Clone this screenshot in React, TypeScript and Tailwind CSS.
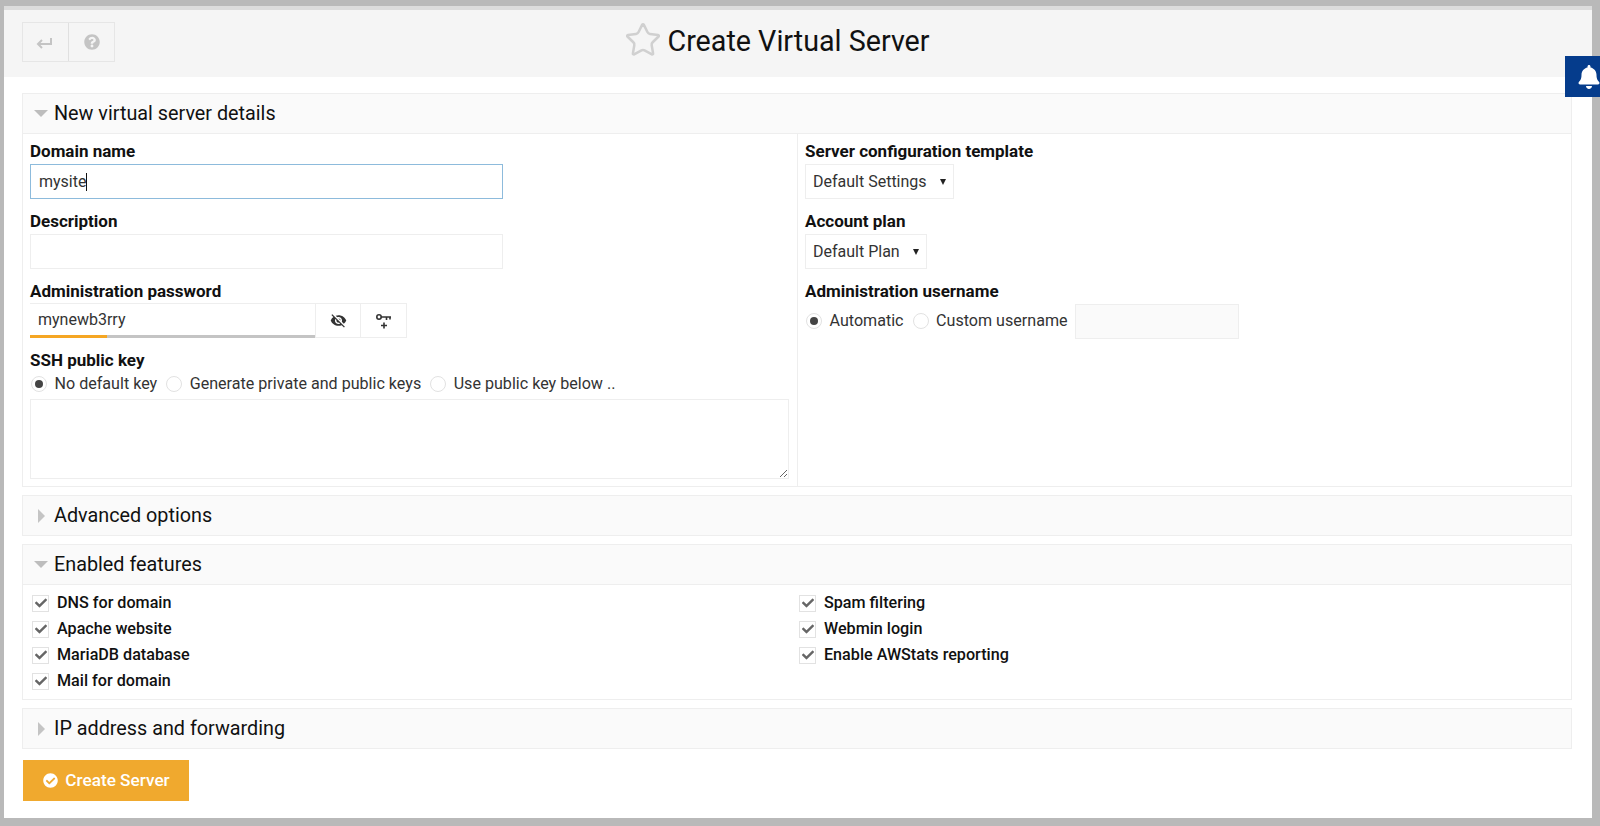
import { Star } from "lucide-react";
import { FaBell, FaCheck, FaCheckCircle, FaQuestionCircle } from "react-icons/fa";
import { MdVisibilityOff } from "react-icons/md";

const leftFeatures = ["DNS for domain", "Apache website", "MariaDB database", "Mail for domain"];
const rightFeatures = ["Spam filtering", "Webmin login", "Enable AWStats reporting"];

const Caret = ({ open }: { open: boolean }) =>
  open ? (
    <span className="mr-[6px] ml-[11px] block h-0 w-0 border-x-[7px] border-t-[7px] border-x-transparent border-t-[#bdbdbd]" />
  ) : (
    <span className="mr-[9px] ml-[15px] block h-0 w-0 border-y-[7px] border-l-[7px] border-y-transparent border-l-[#c4c4c4]" />
  );

const SectionHeader = ({ title, open }: { title: string; open: boolean }) => (
  <div className="flex h-[39px] items-center bg-[#fafafa] text-[19.8px] text-[#111]">
    <Caret open={open} />
    <span>{title}</span>
  </div>
);

const Radio = ({ label, checked }: { label: string; checked?: boolean }) => (
  <label className="flex items-center text-[16.1px]">
    <span className="mr-[7.5px] flex h-[16px] w-[16px] items-center justify-center rounded-full border border-[#e2e2e2] bg-white">
      {checked && <span className="h-[8px] w-[8px] rounded-full bg-[#444]" />}
    </span>
    <span>{label}</span>
  </label>
);

const Feature = ({ label }: { label: string }) => (
  <div className="flex h-[26px] items-center">
    <span className="mr-[8px] flex h-[17px] w-[17px] items-center justify-center border border-[#e2e2e2] bg-white text-[#666]">
      <FaCheck className="h-[12px] w-[12px]" />
    </span>
    <span className="text-[16.15px] font-medium text-[#111]">{label}</span>
  </div>
);

const Label = ({ children }: { children: string }) => (
  <div className="text-[17px] leading-[20px] font-bold text-[#111]">{children}</div>
);

const Select = ({ value, width }: { value: string; width: string }) => (
  <div className={`mt-[3px] flex h-[35px] items-center justify-between border border-[#eee] pr-[7px] pl-[7px] ${width}`}>
    <span>{value}</span>
    <span className="h-0 w-0 border-x-[3.5px] border-t-[6px] border-x-transparent border-t-[#222]" />
  </div>
);

export default function App() {
  return (
    <div className="relative h-[826px] w-[1600px] overflow-hidden bg-[#b9b9b9] pt-[6px] pr-[8px] pb-[8px] pl-[4px] font-['Roboto',sans-serif] text-[16px] text-[#333]">
      <div className="flex h-full flex-col border-t-[4px] border-t-[#dcdcdc] bg-white">
        {/* Title bar */}
        <div className="relative flex h-[67px] shrink-0 items-center justify-center bg-[#f5f5f5]">
          <div className="absolute top-[12px] left-[18px] flex h-[40px] border border-[#e6e6e6] text-[#c4c4c4]">
            <div className="flex w-[46px] items-center justify-center border-r border-[#e0e0e0]">
              <svg viewBox="0 0 18 14" className="-ml-[2px] h-[14px] w-[18px]" fill="none" stroke="currentColor" strokeWidth="2">
                <path d="M2 9h13V3M6 5L2 9l4 4" />
              </svg>
            </div>
            <div className="flex w-[45px] items-center justify-center">
              <FaQuestionCircle className="h-[16px] w-[16px]" />
            </div>
          </div>
          <div className="flex items-center gap-[5px] pr-[42px] pb-[4px]">
            <Star className="-mt-[3px] h-[38px] w-[38px] text-[#d0d0d0]" strokeWidth={1.6} />
            <h1 className="text-[28.7px] leading-none text-[#111]">Create Virtual Server</h1>
          </div>
        </div>

        <div className="flex grow flex-col pt-[16px] pr-[20px] pl-[18px]">
          {/* New virtual server details */}
          <section className="border border-[#eee]">
            <SectionHeader title="New virtual server details" open />
            <div className="flex h-[353px] border-t border-[#eee]">
              <div className="w-[775px] border-r border-[#eee] pt-[7px] pr-[8px] pl-[7px]">
                <Label>Domain name</Label>
                <div className="mt-[3px] flex h-[35px] w-[473px] items-center border border-[#8dbbdc] px-[8px]">
                  <span>mysite</span>
                  <span className="h-[18px] w-px bg-[#111]" />
                </div>
                <div className="mt-[12px]">
                  <Label>Description</Label>
                </div>
                <input className="mt-[3px] block h-[35px] w-[473px] border border-[#eee] px-[8px]" />
                <div className="mt-[12px]">
                  <Label>Administration password</Label>
                </div>
                <div className="mt-[2px] flex h-[35px]">
                  <div className="relative flex w-[285px] items-center border-t border-[#eee] px-[8px]">
                    <span className="-mt-[2px]">mynewb3rry</span>
                    <div className="absolute bottom-0 left-0 flex h-[3px] w-full bg-[#c4c4c4]">
                      <div className="h-full w-[77px] bg-[#f5a623]" />
                    </div>
                  </div>
                  <div className="flex w-[46px] items-center justify-center border border-[#eee] text-[#333]">
                    <MdVisibilityOff className="h-[17px] w-[17px]" />
                  </div>
                  <div className="flex w-[46px] items-center justify-center border-y border-r border-[#eee] text-[#333]">
                    <svg viewBox="0 0 18 18" className="h-[18px] w-[18px]" fill="none" stroke="currentColor">
                      <circle cx="4" cy="5" r="2.2" strokeWidth="1.6" />
                      <path d="M6 5h10M11.5 5v3M15 5v2.5M9 10.5v6M6 13.5h6" strokeWidth="1.6" />
                    </svg>
                  </div>
                </div>
                <div className="mt-[12px]">
                  <Label>SSH public key</Label>
                </div>
                <div className="mt-[2px] flex h-[24px] items-center gap-[9px]">
                  <div className="ml-[1px]">
                    <Radio label="No default key" checked />
                  </div>
                  <Radio label="Generate private and public keys" />
                  <Radio label="Use public key below .." />
                </div>
                <textarea className="mt-[3px] block h-[80px] w-[759px] border border-[#eee]" />
              </div>
              <div className="grow pt-[7px] pr-[8px] pl-[7px]">
                <Label>Server configuration template</Label>
                <Select value="Default Settings" width="w-[149px]" />
                <div className="mt-[12px]">
                  <Label>Account plan</Label>
                </div>
                <Select value="Default Plan" width="w-[122px]" />
                <div className="mt-[12px]">
                  <Label>Administration username</Label>
                </div>
                <div className="mt-[3px] flex items-center gap-[9px]">
                  <div className="ml-[1px]">
                    <Radio label="Automatic" checked />
                  </div>
                  <Radio label="Custom username" />
                  <div className="-ml-[2px] h-[35px] w-[164px] border border-[#eee] bg-[#fafafa]" />
                </div>
              </div>
            </div>
          </section>

          {/* Advanced options */}
          <section className="mt-[8px] border border-[#eee]">
            <SectionHeader title="Advanced options" open={false} />
          </section>

          {/* Enabled features */}
          <section className="mt-[8px] border border-[#eee]">
            <SectionHeader title="Enabled features" open />
            <div className="flex h-[115px] border-t border-[#eee] pt-[5px]">
              <div className="w-[775px] pl-[9px]">
                {leftFeatures.map((f) => (
                  <Feature key={f} label={f} />
                ))}
              </div>
              <div className="pl-[1px]">
                {rightFeatures.map((f) => (
                  <Feature key={f} label={f} />
                ))}
              </div>
            </div>
          </section>

          {/* IP address and forwarding */}
          <section className="mt-[8px] border border-[#eee]">
            <SectionHeader title="IP address and forwarding" open={false} />
          </section>

          <button className="mt-[11px] ml-px flex h-[41px] w-[166px] items-center justify-center gap-[7px] self-start bg-[#f0a92e] pl-px text-[17.2px] font-medium text-white">
            <FaCheckCircle className="h-[15px] w-[15px]" />
            Create Server
          </button>
        </div>
      </div>

      {/* Notification tab */}
      <div className="absolute top-[56px] left-[1565px] flex h-[41px] w-[50px] items-center border border-[#053c8c] bg-[#053c8c] pl-[11px] text-white">
        <FaBell className="h-[24px] w-[24px]" />
      </div>
    </div>
  );
}
